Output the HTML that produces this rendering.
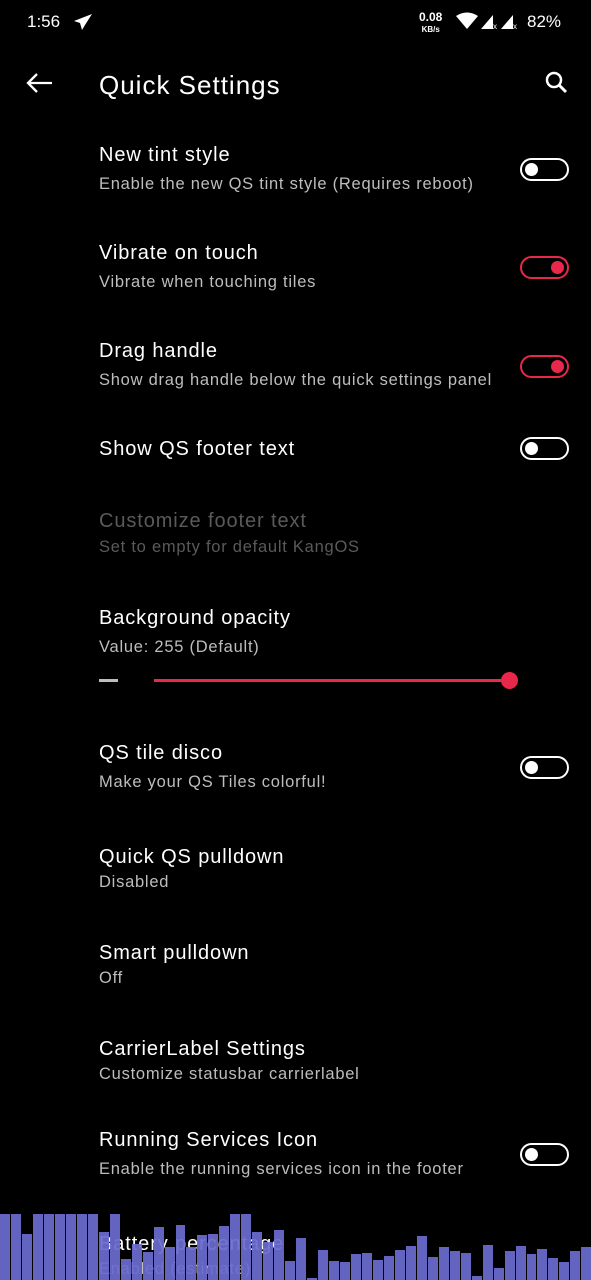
<!DOCTYPE html>
<html><head><meta charset="utf-8"><style>
*{margin:0;padding:0;box-sizing:border-box}
body{width:591px;height:1280px;background:#000;color:#fff;font-family:"Liberation Sans",sans-serif;position:relative;overflow:hidden}
.a{position:absolute;white-space:nowrap}
.t{font-size:20px;line-height:24px;left:99px;color:#fff;letter-spacing:0.9px;margin-top:2px}
.s{font-size:16.5px;line-height:22px;left:99px;color:#bdbdbd;letter-spacing:0.75px;margin-top:1px}
.dis{color:#5a5a5a}
.tg{position:absolute;left:520px;width:49px;height:23px;border:2.5px solid #fff;border-radius:12px}
.tg::after{content:"";position:absolute;left:3px;top:2.5px;width:13px;height:13px;border-radius:50%;background:#fff}
.tg.on{border-color:#e8284a}
.tg.on::after{left:auto;right:3px;background:#e8284a}
#bars{position:absolute;left:0;bottom:0;width:591px;height:70px;display:flex;align-items:flex-end;gap:1px}
#bars div{flex:1;background:#6a6acf;opacity:.93}
</style></head><body>
<div class="a" style="left:27px;top:11px;font-size:17px;line-height:22px">1:56</div>
<svg class="a" style="left:73px;top:13px" width="20" height="18" viewBox="0 0 20 18"><path d="M19 1 L1 8 L7 10 L9 17 L12 12 Z" fill="#fff"/></svg>
<div class="a" style="left:419px;top:12px;font-size:12px;line-height:11px;font-weight:bold;text-align:center">0.08<br><span style="font-size:8px">KB/s</span></div>
<svg class="a" style="left:455px;top:12px" width="24" height="18" viewBox="0 0 24 18"><path d="M1 4 Q12 -3 23 4 L12 17 Z" fill="#fff"/></svg>
<svg class="a" style="left:480px;top:12px" width="40" height="18" viewBox="0 0 40 18"><path d="M1 17 L13 3 L13 17 Z M21 17 L33 3 L33 17 Z" fill="#fff"/><text x="13" y="17" font-size="8" fill="#fff" font-family="Liberation Sans">x</text><text x="33" y="17" font-size="8" fill="#fff" font-family="Liberation Sans">x</text></svg>
<div class="a" style="left:527px;top:11px;font-size:17px;line-height:22px">82%</div>
<svg class="a" style="left:24px;top:71px" width="30" height="24" viewBox="0 0 30 24"><path d="M28 12 H4 M13 3 L4 12 L13 21" stroke="#fff" stroke-width="2.3" fill="none"/></svg>
<div class="a" style="left:99px;top:69px;font-size:26px;line-height:32px;letter-spacing:1px">Quick Settings</div>
<svg class="a" style="left:543px;top:70px" width="28" height="26" viewBox="0 0 28 26"><circle cx="11" cy="10" r="7" stroke="#fff" stroke-width="2.5" fill="none"/><path d="M16 15 L23 22" stroke="#fff" stroke-width="3"/></svg>

<div class="a t" style="top:141px">New tint style</div>
<div class="a s" style="top:172px">Enable the new QS tint style (Requires reboot)</div>
<div class="tg" style="top:158px"></div>

<div class="a t" style="top:239px">Vibrate on touch</div>
<div class="a s" style="top:270px">Vibrate when touching tiles</div>
<div class="tg on" style="top:256px"></div>

<div class="a t" style="top:337px">Drag handle</div>
<div class="a s" style="top:368px">Show drag handle below the quick settings panel</div>
<div class="tg on" style="top:355px"></div>

<div class="a t" style="top:435px">Show QS footer text</div>
<div class="tg" style="top:437px"></div>

<div class="a t dis" style="top:507px">Customize footer text</div>
<div class="a s dis" style="top:535px">Set to empty for default KangOS</div>

<div class="a t" style="top:604px">Background opacity</div>
<div class="a s" style="top:635px">Value: 255 (Default)</div>
<div class="a" style="left:99px;top:679px;width:19px;height:3px;background:#bdbdbd"></div>
<div class="a" style="left:154px;top:679px;width:356px;height:3px;background:#e8284a"></div>
<div class="a" style="left:501px;top:672px;width:17px;height:17px;border-radius:50%;background:#e8284a"></div>

<div class="a t" style="top:739px">QS tile disco</div>
<div class="a s" style="top:770px">Make your QS Tiles colorful!</div>
<div class="tg" style="top:756px"></div>

<div class="a t" style="top:843px">Quick QS pulldown</div>
<div class="a s" style="top:870px">Disabled</div>

<div class="a t" style="top:939px">Smart pulldown</div>
<div class="a s" style="top:966px">Off</div>

<div class="a t" style="top:1035px">CarrierLabel Settings</div>
<div class="a s" style="top:1062px">Customize statusbar carrierlabel</div>

<div class="a t" style="top:1126px">Running Services Icon</div>
<div class="a s" style="top:1157px">Enable the running services icon in the footer</div>
<div class="tg" style="top:1143px"></div>

<div class="a t" style="top:1230px">Battery percentage</div>
<div class="a s" style="top:1257px">Enabled (estimate)</div>

<div id="bars">
<div style="height:66px"></div><div style="height:66px"></div><div style="height:46px"></div><div style="height:66px"></div><div style="height:66px"></div><div style="height:66px"></div><div style="height:66px"></div><div style="height:66px"></div><div style="height:66px"></div><div style="height:48px"></div><div style="height:66px"></div><div style="height:21px"></div><div style="height:36px"></div><div style="height:28px"></div><div style="height:53px"></div><div style="height:33px"></div><div style="height:55px"></div><div style="height:33px"></div><div style="height:45px"></div><div style="height:46px"></div><div style="height:54px"></div><div style="height:66px"></div><div style="height:66px"></div><div style="height:48px"></div><div style="height:38px"></div><div style="height:50px"></div><div style="height:19px"></div><div style="height:42px"></div><div style="height:2px"></div><div style="height:30px"></div><div style="height:19px"></div><div style="height:18px"></div><div style="height:26px"></div><div style="height:27px"></div><div style="height:20px"></div><div style="height:24px"></div><div style="height:30px"></div><div style="height:34px"></div><div style="height:44px"></div><div style="height:23px"></div><div style="height:33px"></div><div style="height:29px"></div><div style="height:27px"></div><div style="height:4px"></div><div style="height:35px"></div><div style="height:12px"></div><div style="height:29px"></div><div style="height:34px"></div><div style="height:26px"></div><div style="height:31px"></div><div style="height:22px"></div><div style="height:18px"></div><div style="height:29px"></div><div style="height:33px"></div>
</div>
</body></html>
